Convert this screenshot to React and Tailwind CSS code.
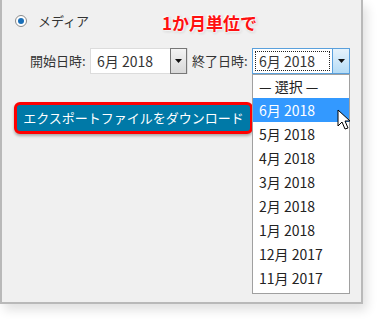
const font = { fontFamily: '"Noto Sans CJK JP", "Noto Sans", sans-serif' };

const months = ["5月 2018", "4月 2018", "3月 2018", "2月 2018", "1月 2018", "12月 2017", "11月 2017"];

const Arrow = () => (
  <svg width="7" height="4" viewBox="0 0 7 4">
    <path d="M0 0h7L3.5 4z" fill="#111" />
  </svg>
);

export default function App() {
  return (
    <div className="relative w-[377px] h-[319px] bg-white overflow-hidden" style={font}>
      <div className="w-[363px] h-[304px] bg-[#f0f0f0] border-l-2 border-r-2 border-b-2 border-[#b9b9b9] shadow-[4px_6px_10px_rgba(0,0,0,0.12)] pt-[12px] pl-[12px]">
        {/* radio */}
        <div className="flex items-center h-[18px]">
          <span className="ml-[1px] w-[12px] h-[12px] rounded-full border border-[#8a8a8a] bg-white flex items-center justify-center">
            <span className="w-[6px] h-[6px] rounded-full bg-[#1a6fb8]" />
          </span>
          <span className="ml-[11px] text-[13px] text-[#333]">メディア</span>
        </div>

        {/* date row */}
        <div className="flex items-center mt-[18px] h-[26px] text-[13px] text-[#333] whitespace-nowrap">
          <span className="ml-[16px] w-[60px]">開始日時:</span>
          <div className="w-[98px] h-[26px] flex bg-white border border-[#dcdcdc] text-[14px]">
            <span className="flex-1 pl-[6px] leading-[24px]">6月 2018</span>
            <span className="w-[17px] h-[26px] -mt-[1px] border border-[#777] bg-gradient-to-b from-[#f4f4f4] to-[#d8d8d8] flex items-center justify-center">
              <Arrow />
            </span>
          </div>
          <span className="ml-[4px] w-[60px]">終了日時:</span>
          <div className="w-[98px] h-[26px] flex bg-white border border-[#5aa0dc] text-[14px]">
            <span className="flex-1 m-[2px] pl-[3px] leading-[19px] border border-dotted border-[#222]">6月 2018</span>
            <span className="w-[17px] border-l border-[#5aa0dc] bg-gradient-to-b from-[#e6f3fc] to-[#b5dcf6] flex items-center justify-center">
              <Arrow />
            </span>
          </div>
        </div>

        {/* button */}
        <button className="mt-[28px] w-[239px] h-[32px] rounded-[6px] border-[3px] border-[#ff0000] bg-[#0079a7] text-white text-[13px] whitespace-nowrap shadow-[0_2px_3px_rgba(0,0,0,0.3)] flex items-center justify-center">
          エクスポートファイルをダウンロード
        </button>
      </div>

      {/* annotation */}
      <div
        className="absolute left-[162px] top-[10px] text-[17px] font-bold text-[#ff1010]"
        style={{ textShadow: "0 0 2px #fff, 1px 1px 2px #fff, -1px -1px 2px #fff, 1px 1px 3px rgba(0,0,0,0.3)" }}
      >
        1か月単位で
      </div>

      {/* dropdown list */}
      <div className="absolute left-[252px] top-[74px] w-[98px] bg-white border border-[#a0a0a0] text-[14px] text-[#222]">
        <div className="h-[23px] leading-[23px] pl-[6px]">— 選択 —</div>
        <div className="h-[24px] leading-[24px] pl-[6px] bg-[#3399ff] text-white">6月 2018</div>
        {months.map((m) => (
          <div key={m} className="h-[24px] leading-[24px] pl-[6px]">{m}</div>
        ))}
        <div className="h-[3px]" />
      </div>

      {/* cursor */}
      <svg className="absolute left-[337px] top-[109px]" width="14" height="22" viewBox="0 0 14 22">
        <path d="M1 1v16l4-4 3 7 3-1-3-7h5z" fill="#fff" stroke="#000" strokeWidth="1" strokeLinejoin="round" />
      </svg>
    </div>
  );
}
